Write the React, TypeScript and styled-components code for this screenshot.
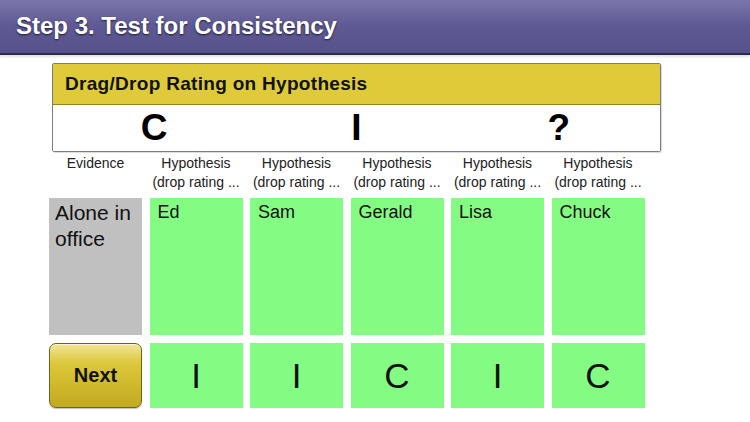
import React from 'react'
import styled, { createGlobalStyle } from 'styled-components'

const GlobalStyle = createGlobalStyle`
  html, body {
    margin: 0;
    padding: 0;
    background: #ffffff;
    font-family: 'Liberation Sans', Arial, sans-serif;
  }
`

const hypotheses = ['Ed', 'Sam', 'Gerald', 'Lisa', 'Chuck']
const ratings = ['I', 'I', 'C', 'I', 'C']
const scale = ['C', 'I', '?']

const Page = styled.div`
  width: 750px;
  height: 422px;
  overflow: hidden;
  background: #ffffff;
`

const TitleBar = styled.header`
  height: 53px;
  display: flex;
  align-items: center;
  padding: 0 16px;
  background: linear-gradient(#7b76aa, #5e5893 50%, #57518c);
  border-bottom: 2px solid #2e2c45;
  box-shadow: 0 2px 2px rgba(0, 0, 0, 0.12);
`

const Title = styled.h1`
  margin: 0 0 1px;
  font-size: 24px;
  font-weight: bold;
  color: #ffffff;
  text-shadow: 0 1px 2px rgba(0, 0, 0, 0.7);
`

const Panel = styled.section`
  margin: 8px 0 0 52px;
  width: 607px;
  border: 1px solid #7d7d7d;
  border-radius: 2px;
  box-shadow: 1px 1px 1px rgba(0, 0, 0, 0.15);
`

const PanelHead = styled.div`
  height: 40px;
  display: flex;
  align-items: center;
  padding: 0 12px;
  background: #dfcb3a;
  border-bottom: 1px solid #8c8226;
  font-size: 19px;
  font-weight: bold;
  letter-spacing: 0.3px;
  color: #111;
`

const Scale = styled.div`
  height: 46px;
  display: grid;
  grid-template-columns: repeat(3, 1fr);
  align-items: center;
  background: #ffffff;
`

const ScaleMark = styled.span`
  text-align: center;
  font-size: 37px;
  font-weight: bold;
  line-height: 46px;
  color: #000;
`

const Board = styled.div`
  margin: 0 0 0 49px;
  display: grid;
  grid-template-columns: repeat(6, 93px);
  grid-template-rows: 38px 137px 65px;
  column-gap: 7.5px;
  row-gap: 8px;
`

const ColLabel = styled.div`
  display: flex;
  flex-direction: column;
  align-items: center;
  padding-top: 2px;
  font-size: 14px;
  line-height: 19px;
  color: #222;
  white-space: nowrap;
`

const EvidenceCell = styled.div`
  background: #c0c0c0;
  padding: 2px 6px;
  font-size: 21px;
  line-height: 26px;
  color: #111;
`

const DropCell = styled.div<{ $centered?: boolean }>`
  background: #84fc84;
  display: flex;
  color: #111;
  ${(p) =>
    p.$centered
      ? `
    align-items: center;
    justify-content: center;
    font-size: 35px;
  `
      : `
    align-items: flex-start;
    padding: 4px 8px;
    font-size: 18px;
  `}
`

const NextButton = styled.button`
  margin: 0;
  border: 1px solid #6d6420;
  border-radius: 7px;
  background: linear-gradient(#f1e59a, #ddc83c 30%, #cdb62a 70%, #c2ab22);
  box-shadow: inset 0 1px 0 rgba(255, 255, 255, 0.6), 0 1px 1px rgba(0, 0, 0, 0.25);
  font-family: inherit;
  font-size: 20px;
  font-weight: bold;
  color: #111;
  cursor: pointer;
`

export default function App() {
  return (
    <Page>
      <GlobalStyle />
      <TitleBar>
        <Title>Step 3. Test for Consistency</Title>
      </TitleBar>
      <Panel>
        <PanelHead>Drag/Drop Rating on Hypothesis</PanelHead>
        <Scale>
          {scale.map((s) => (
            <ScaleMark key={s}>{s}</ScaleMark>
          ))}
        </Scale>
      </Panel>
      <Board>
        <ColLabel>Evidence</ColLabel>
        {hypotheses.map((h) => (
          <ColLabel key={'l' + h}>
            <span>Hypothesis</span>
            <span>(drop rating ...</span>
          </ColLabel>
        ))}
        <EvidenceCell>
          Alone in
          <br />
          office
        </EvidenceCell>
        {hypotheses.map((h) => (
          <DropCell key={h}>{h}</DropCell>
        ))}
        <NextButton>Next</NextButton>
        {ratings.map((r, i) => (
          <DropCell key={'r' + i} $centered>
            {r}
          </DropCell>
        ))}
      </Board>
    </Page>
  )
}
